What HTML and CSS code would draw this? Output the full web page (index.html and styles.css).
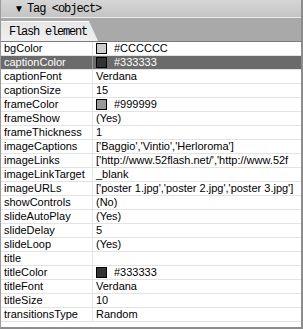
FILE: index.html
```html
<!DOCTYPE html>
<html lang="en">
<head>
    <meta charset="UTF-8">
    <title>Tag object</title>
    <link rel="stylesheet" href="styles.css">
</head>
<body>
    <div class="panel">
        <div class="titlebar">
            <span class="grip"></span>
            <span class="arrow">&#9660;</span>
            <span class="title">Tag &lt;object&gt;</span>
        </div>
        <div class="tabs">
            <div class="tab">Flash element</div>
        </div>
        <div class="props">
            <div class="row"><div class="name">bgColor</div><div class="val"><span class="swatch sw-c"></span>#CCCCCC</div></div>
            <div class="row selected"><div class="name">captionColor</div><div class="val"><span class="swatch sw-3"></span>#333333</div></div>
            <div class="row"><div class="name">captionFont</div><div class="val">Verdana</div></div>
            <div class="row"><div class="name">captionSize</div><div class="val">15</div></div>
            <div class="row"><div class="name">frameColor</div><div class="val"><span class="swatch sw-9"></span>#999999</div></div>
            <div class="row"><div class="name">frameShow</div><div class="val">(Yes)</div></div>
            <div class="row"><div class="name">frameThickness</div><div class="val">1</div></div>
            <div class="row"><div class="name">imageCaptions</div><div class="val">['Baggio','Vintio','Herloroma']</div></div>
            <div class="row"><div class="name">imageLinks</div><div class="val">['http://www.52flash.net/','http://www.52f</div></div>
            <div class="row"><div class="name">imageLinkTarget</div><div class="val">_blank</div></div>
            <div class="row"><div class="name">imageURLs</div><div class="val">['poster 1.jpg','poster 2.jpg','poster 3.jpg']</div></div>
            <div class="row"><div class="name">showControls</div><div class="val">(No)</div></div>
            <div class="row"><div class="name">slideAutoPlay</div><div class="val">(Yes)</div></div>
            <div class="row"><div class="name">slideDelay</div><div class="val">5</div></div>
            <div class="row"><div class="name">slideLoop</div><div class="val">(Yes)</div></div>
            <div class="row"><div class="name">title</div><div class="val"></div></div>
            <div class="row"><div class="name">titleColor</div><div class="val"><span class="swatch sw-3"></span>#333333</div></div>
            <div class="row"><div class="name">titleFont</div><div class="val">Verdana</div></div>
            <div class="row"><div class="name">titleSize</div><div class="val">10</div></div>
            <div class="row"><div class="name">transitionsType</div><div class="val">Random</div></div>
        </div>
    </div>
</body>
</html>
```

FILE: styles.css
```css
* {
    margin: 0;
    padding: 0;
    box-sizing: border-box;
}

body {
    background: #ffffff;
    font-family: "Liberation Sans", Arial, sans-serif;
}

.panel {
    width: 303px;
    height: 329px;
    background: #ffffff;
    border-left: 1px solid #9a9a9a;
    border-right: 2px solid #8c8c8c;
    border-bottom: 2px solid #8c8c8c;
    overflow: hidden;
}

.titlebar {
    height: 18px;
    display: flex;
    align-items: center;
    background: linear-gradient(#d6d6d6, #c4c4c4);
    border-bottom: 1px solid #ececec;
}

.grip {
    width: 5px;
    height: 12px;
    margin-left: 2px;
    background-image: radial-gradient(#7a7a7a 45%, transparent 50%);
    background-size: 2px 2px;
}

.arrow {
    font-size: 10px;
    color: #000;
    margin-left: 6px;
    margin-right: 3px;
}

.title,
.tab {
    font-family: "Liberation Mono", "Courier New", monospace;
    font-size: 12px;
    letter-spacing: -1.2px;
    color: #000;
}

.title {
    letter-spacing: -1px;
    flex: none;
}

.tabs {
    height: 24px;
    background: #a9a9a9;
    border-bottom: 1px solid #7c7c7c;
    display: flex;
    align-items: flex-end;
}

.tab {
    width: 97px;
    height: 20px;
    padding: 3px 0 0 8px;
    background: linear-gradient(#e6e6e6, #f0f0f0);
    border-top: 1px solid #ffffff;
    clip-path: polygon(0 0, 88px 0, 97px 100%, 0 100%);
}

.row {
    display: grid;
    grid-template-columns: 92px 1fr;
    height: 14px;
    border-bottom: 1px solid #e3e3e3;
    font-size: 11px;
    line-height: 13px;
    color: #000;
}

.name {
    padding-left: 3px;
    border-right: 1px solid #e3e3e3;
    white-space: nowrap;
}

.val {
    padding-left: 3px;
    white-space: nowrap;
    overflow: hidden;
    display: flex;
    align-items: center;
}

.selected {
    background: #6b6b6b;
    color: #ffffff;
}

.selected .name {
    border-right-color: #9a9a9a;
}

.swatch {
    width: 11px;
    height: 11px;
    border: 1px solid #000;
    margin-right: 7px;
    flex: none;
}

.sw-c { background: #cccccc; }
.sw-3 { background: #333333; }
.sw-9 { background: #999999; }
```
